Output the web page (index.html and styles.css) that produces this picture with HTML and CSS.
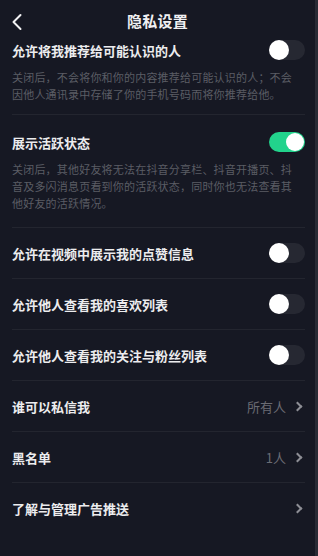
FILE: index.html
```html
<!DOCTYPE html>
<html lang="zh-CN">
<head>
    <meta charset="UTF-8">
    <meta name="viewport" content="width=device-width, initial-scale=1.0">
    <title>隐私设置</title>
    <link rel="stylesheet" href="styles.css">
</head>
<body>
    <div class="page">
        <header class="topbar">
            <svg class="back" width="12" height="18" viewBox="0 0 12 18">
                <path d="M9.5 2 L2.5 9 L9.5 16" fill="none" stroke="#f2f2f4" stroke-width="2" stroke-linecap="round" stroke-linejoin="round"/>
            </svg>
            <h1>隐私设置</h1>
        </header>

        <div class="list">
            <div class="item item-first">
                <div class="line">
                    <span class="label">允许将我推荐给可能认识的人</span>
                    <span class="switch"></span>
                </div>
                <p class="desc">关闭后，不会将你和你的内容推荐给可能认识的人；不会因他人通讯录中存储了你的手机号码而将你推荐给他。</p>
            </div>

            <div class="item item-desc">
                <div class="line">
                    <span class="label">展示活跃状态</span>
                    <span class="switch on"></span>
                </div>
                <p class="desc">关闭后，其他好友将无法在抖音分享栏、抖音开播页、抖音及多闪消息页看到你的活跃状态，同时你也无法查看其他好友的活跃情况。</p>
            </div>

            <div class="item">
                <div class="line">
                    <span class="label">允许在视频中展示我的点赞信息</span>
                    <span class="switch"></span>
                </div>
            </div>

            <div class="item">
                <div class="line">
                    <span class="label">允许他人查看我的喜欢列表</span>
                    <span class="switch"></span>
                </div>
            </div>

            <div class="item">
                <div class="line">
                    <span class="label">允许他人查看我的关注与粉丝列表</span>
                    <span class="switch"></span>
                </div>
            </div>

            <div class="item">
                <div class="line">
                    <span class="label">谁可以私信我</span>
                    <span class="value">所有人 <i class="arrow"></i></span>
                </div>
            </div>

            <div class="item">
                <div class="line">
                    <span class="label">黑名单</span>
                    <span class="value">1人 <i class="arrow"></i></span>
                </div>
            </div>

            <div class="item item-last">
                <div class="line">
                    <span class="label">了解与管理广告推送</span>
                    <span class="value"><i class="arrow"></i></span>
                </div>
            </div>
        </div>
    </div>
</body>
</html>
```

FILE: styles.css
```css
* {
    margin: 0;
    padding: 0;
    box-sizing: border-box;
}

body {
    font-family: "Noto Sans CJK SC", "Noto Sans", sans-serif;
    background-color: #161823;
    color: #ececee;
}

.page {
    height: 556px;
    overflow: hidden;
    border-right: 3px solid #292b35;
}

.topbar {
    position: relative;
    height: 40px;
    display: flex;
    align-items: center;
    justify-content: center;
}

.topbar .back {
    position: absolute;
    left: 11px;
    top: 13px;
}

.topbar h1 {
    font-size: 15px;
    font-weight: 700;
    color: #f0f0f2;
    letter-spacing: 0.3px;
}

.list {
    padding: 0 10px 0 12px;
}

.item {
    height: 51px;
    display: flex;
    flex-direction: column;
    justify-content: center;
    border-bottom: 1px solid #23252f;
}

.item-first {
    height: auto;
    padding: 0 0 11px;
}

.item-desc {
    height: auto;
    padding: 17px 0 15px;
}

.item-last {
    border-bottom: none;
}

.line {
    display: flex;
    align-items: center;
    justify-content: space-between;
    height: 20px;
}

.label {
    font-size: 13px;
    font-weight: 700;
    color: #ececee;
}

.desc {
    margin-top: 9px;
    font-size: 11px;
    line-height: 17px;
    color: #5b5d65;
    letter-spacing: 0.2px;
    padding-right: 4px;
}

.switch {
    position: relative;
    width: 36px;
    height: 20px;
    border-radius: 10px;
    background-color: #262832;
}

.switch::after {
    content: "";
    position: absolute;
    left: 0;
    top: 0;
    width: 20px;
    height: 20px;
    border-radius: 50%;
    background-color: #fff;
}

.switch.on {
    background-color: #22d38c;
}

.switch.on::after {
    left: 17px;
    top: 1px;
    width: 18px;
    height: 18px;
}

.value {
    display: flex;
    align-items: center;
    font-size: 13px;
    color: #6a6b73;
    padding-right: 4px;
}

.arrow {
    display: inline-block;
    width: 7px;
    height: 7px;
    margin-left: 8px;
    border-top: 2px solid #8d8e95;
    border-right: 2px solid #8d8e95;
    transform: rotate(45deg);
}
```
